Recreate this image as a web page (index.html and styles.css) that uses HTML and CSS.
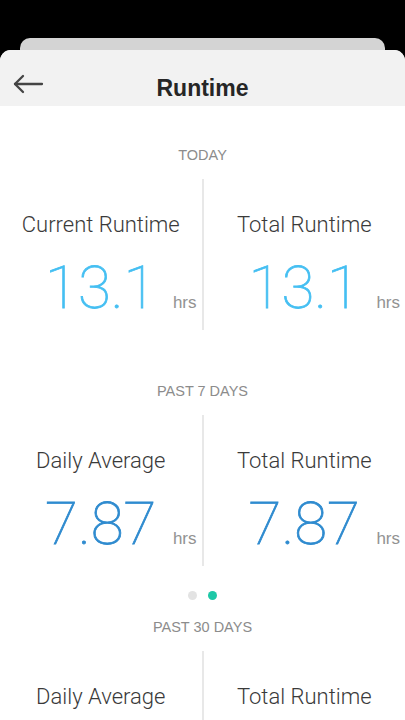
FILE: index.html
```html
<!DOCTYPE html>
<html lang="en">

<head>
    <meta charset="UTF-8">
    <meta name="viewport" content="width=device-width, initial-scale=1.0">
    <title>Runtime</title>
    <link rel="stylesheet" href="styles.css">
</head>

<body>
    <div class="back-card"></div>
    <div class="sheet">
        <header class="top-bar">
            <button class="back-btn" type="button" aria-label="Back">
                <svg width="32" height="22" viewBox="0 0 32 22" fill="none" stroke="#444" stroke-width="2.3" stroke-linecap="round" stroke-linejoin="round">
                    <path d="M30 11H3" />
                    <path d="M11 3L3 11L11 19" />
                </svg>
            </button>
            <h1>Runtime</h1>
            <span></span>
        </header>

        <main>
            <section class="period period-first">
                <h2>TODAY</h2>
                <div class="stats">
                    <div class="stat">
                        <p class="stat-label">Current Runtime</p>
                        <p class="stat-value today"><span class="num">13.1</span><span class="unit">hrs</span></p>
                    </div>
                    <div class="stat">
                        <p class="stat-label">Total Runtime</p>
                        <p class="stat-value today"><span class="num">13.1</span><span class="unit">hrs</span></p>
                    </div>
                </div>
            </section>

            <section class="period">
                <h2>PAST 7 DAYS</h2>
                <div class="stats">
                    <div class="stat">
                        <p class="stat-label">Daily Average</p>
                        <p class="stat-value week"><span class="num">7.87</span><span class="unit">hrs</span></p>
                    </div>
                    <div class="stat">
                        <p class="stat-label">Total Runtime</p>
                        <p class="stat-value week"><span class="num">7.87</span><span class="unit">hrs</span></p>
                    </div>
                </div>
            </section>

            <div class="pager">
                <span class="dot"></span>
                <span class="dot active"></span>
            </div>

            <section class="period period-last">
                <h2>PAST 30 DAYS</h2>
                <div class="stats">
                    <div class="stat">
                        <p class="stat-label">Daily Average</p>
                    </div>
                    <div class="stat">
                        <p class="stat-label">Total Runtime</p>
                    </div>
                </div>
            </section>
        </main>
    </div>
</body>

</html>
```

FILE: styles.css
```css
body {
    margin: 0;
    padding: 0;
    background-color: #000;
    font-family: 'Liberation Sans', Arial, sans-serif;
}

.back-card {
    margin: 38px 20px 0;
    height: 12px;
    background-color: #d4d4d4;
    border-radius: 10px 10px 0 0;
}

.sheet {
    background-color: #fff;
    border-radius: 11px 11px 0 0;
    overflow: hidden;
    min-height: 700px;
}

.top-bar {
    display: grid;
    grid-template-columns: 56px 1fr 56px;
    align-items: center;
    height: 56px;
    box-sizing: border-box;
    padding-top: 12px;
    background-color: #f2f2f2;
}

.back-btn {
    background: none;
    border: none;
    padding: 0 0 0 12px;
    display: flex;
    cursor: pointer;
}

.top-bar h1 {
    margin: 0;
    padding-top: 8px;
    text-align: center;
    font-size: 23px;
    line-height: 26px;
    font-weight: bold;
    color: #262626;
}

.period {
    margin-top: 53px;
}

.period-first {
    margin-top: 41px;
}

.period-last {
    margin-top: 0;
}

.period h2 {
    margin: 0 0 16px;
    text-align: center;
    font-size: 14.5px;
    line-height: 16px;
    font-weight: normal;
    color: #8c8c8c;
}

.stats {
    display: flex;
    height: 151px;
}

.stat {
    flex: 1;
    padding: 33px 5px 0;
}

.stat + .stat {
    border-left: 2px solid #e8e8e8;
}

.stat-label {
    margin: 0;
    text-align: center;
    font-family: Roboto, sans-serif;
    font-weight: 300;
    font-size: 22px;
    line-height: 26px;
    color: #3a3a3a;
}

.stat-value {
    display: grid;
    grid-template-columns: 1fr auto 1fr;
    align-items: baseline;
    margin: 20px 0 0;
}

.stat-value::before {
    content: '';
}

.num {
    font-family: Roboto, sans-serif;
    font-weight: 100;
    font-size: 60px;
    line-height: 60px;
    -webkit-text-stroke: 0.8px currentColor;
}

.today .num {
    color: #45bff2;
}

.week .num {
    color: #2f8bcf;
}

.unit {
    justify-self: end;
    font-size: 17px;
    line-height: 17px;
    color: #929292;
}

.pager {
    display: flex;
    justify-content: center;
    gap: 11px;
    margin: 25px 0 19px;
}

.dot {
    width: 9px;
    height: 9px;
    border-radius: 50%;
    background-color: #e3e3e3;
}

.dot.active {
    background-color: #1ec8a7;
}
```
